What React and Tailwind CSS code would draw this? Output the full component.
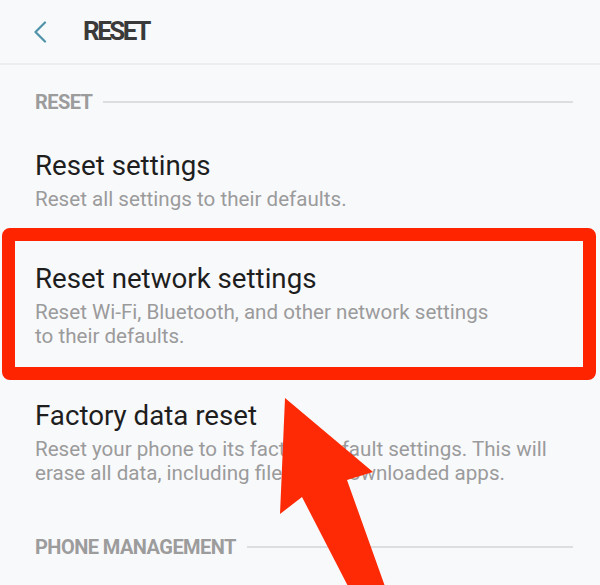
import React from "react";

function BackChevron() {
  return (
    <svg width="14" height="22" viewBox="0 0 14 22" fill="none">
      <path d="M12 1.5 L2.5 11 L12 20.5" stroke="#4f93a9" strokeWidth="2.2" strokeLinecap="round" strokeLinejoin="round" />
    </svg>
  );
}

function SectionLabel({ children }) {
  return (
    <div className="flex items-center gap-[11px] pl-[35px] pr-[27px]">
      <span className="text-[20px] leading-[24px] font-bold tracking-[-0.55px] text-[#9c9c9c]">{children}</span>
      <div className="h-[2px] flex-1 bg-[#dddee0]" />
    </div>
  );
}

function Item({ title, lines }) {
  return (
    <div className="px-[35px] py-[26px]">
      <div className="text-[27.7px] leading-[32px] text-[#1e1e1e]">{title}</div>
      <div className="mt-[5px] text-[20.6px] leading-[24px] text-[#9b9b9b]">
        {lines.map((l) => (
          <div key={l}>{l}</div>
        ))}
      </div>
    </div>
  );
}

export default function App() {
  return (
    <div className="relative h-[585px] w-[600px] overflow-hidden bg-[#f8f9fb]" style={{ fontFamily: "Roboto, 'Noto Sans', sans-serif" }}>
      <header className="flex h-[65px] items-center border-b-2 border-[#eceef0] pl-[33px]">
        <BackChevron />
        <h1 className="ml-[36px] text-[26px] font-bold tracking-[-2.5px] text-[#3a3a3a]">RESET</h1>
      </header>

      <div className="pt-[25px]">
        <SectionLabel>RESET</SectionLabel>
      </div>

      <div className="mt-[10px] flex flex-col">
        <Item title="Reset settings" lines={["Reset all settings to their defaults."]} />
        <Item
          title="Reset network settings"
          lines={["Reset Wi-Fi, Bluetooth, and other network settings", "to their defaults."]}
        />
        <Item
          title="Factory data reset"
          lines={["Reset your phone to its factory default settings. This will", "erase all data, including files and downloaded apps."]}
        />
      </div>

      <div className="mt-[24px]">
        <SectionLabel>PHONE MANAGEMENT</SectionLabel>
      </div>

      {/* highlight frame around the network option */}
      <div className="pointer-events-none absolute left-[2px] top-[228px] h-[152px] w-[594px] rounded-[8px] border-[13px] border-[#fe2400]" />

      {/* pointer arrow */}
      <svg className="pointer-events-none absolute left-0 top-0" width="600" height="585" viewBox="0 0 600 585">
        <polygon
          points="285,398 373,472 347,480 387,592 351,592 302,497 280,514"
          fill="#fe2a06"
        />
      </svg>
    </div>
  );
}
